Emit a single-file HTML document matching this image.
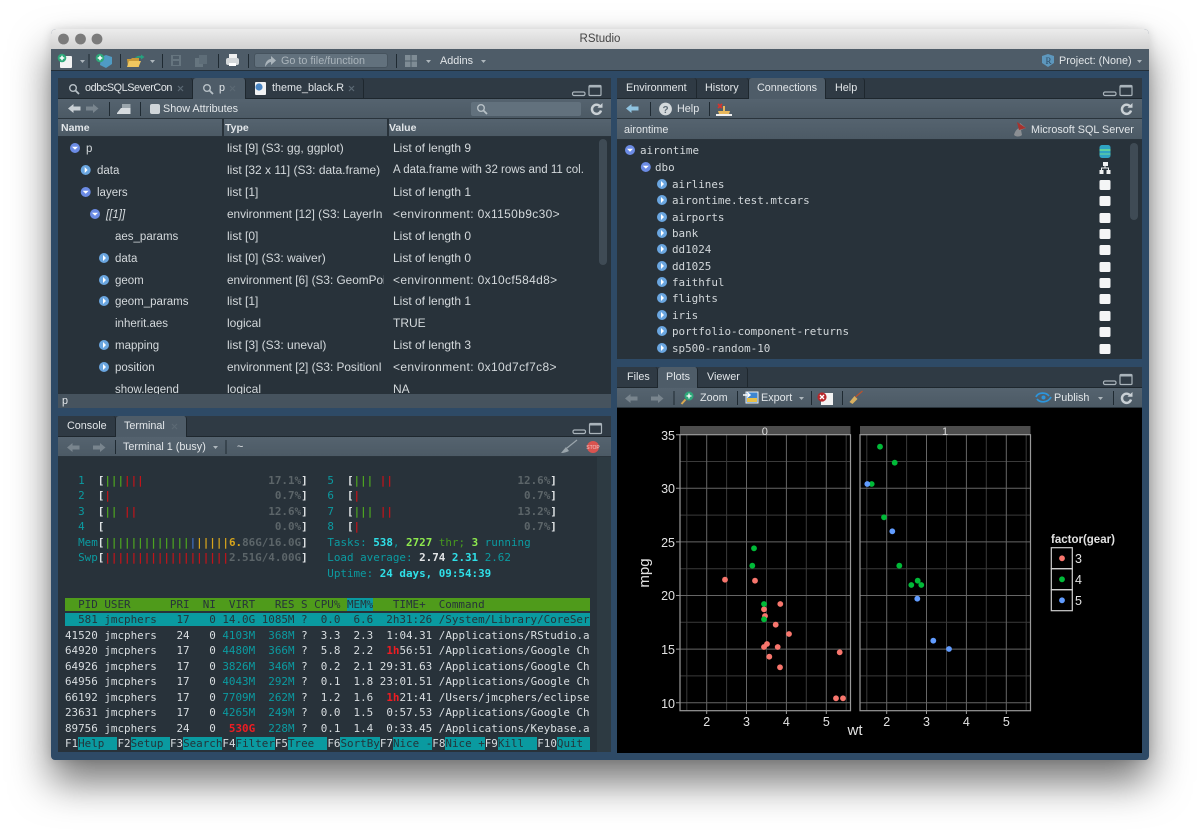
<!DOCTYPE html>
<html><head><meta charset="utf-8"><title>RStudio</title>
<style>
html,body{margin:0;padding:0;background:#fff;width:1200px;height:833px;overflow:hidden}
*{box-sizing:border-box}
.a{position:absolute}
.t{position:absolute;font:10.8px/16px "Liberation Sans",sans-serif;color:#e2e6e9;white-space:pre}
.v{font-size:12px;overflow:hidden;color:#d4d9dc}
.e{letter-spacing:.35px}
.n{font-size:11.5px;color:#d4d9dc;margin-top:1px}
.m{position:absolute;font:10.9px/16px "DejaVu Sans Mono","Liberation Mono",monospace;color:#d2d7da;white-space:pre;margin-top:1px}
#win{position:absolute;left:51px;top:29px;width:1098px;height:731px;border-radius:5px 5px 4px 4px;background:#2e4a66;box-shadow:0 22px 40px rgba(0,0,0,.55),0 0 10px rgba(0,0,0,.12)}
#title{position:absolute;left:51px;top:29px;width:1098px;height:20px;border-radius:5px 5px 0 0;background:linear-gradient(#ececec,#d2d2d2);font:11.5px/21px "Liberation Sans",sans-serif;color:#444;text-align:center}
#mtb{position:absolute;left:51px;top:49px;width:1098px;height:22px;background:#4e5c68;border-bottom:1px solid #24303a}
.pane{position:absolute;background:#28323a;border-radius:4px 4px 0 0;overflow:hidden}
.strip{position:absolute;background:#2f3a44;border-bottom:1px solid #1e272e}
.tab{position:absolute;background:#2f3a44;border-right:1px solid #1e272e;border-radius:3px 3px 0 0}
.on{background:#4e5c68}
.bar{position:absolute;background:linear-gradient(#55636f,#4c5a65);border-bottom:1px solid #2a343c}
#term{position:absolute;left:65px;top:472.75px;font:10.9px/15.5px "DejaVu Sans Mono","Liberation Mono",monospace;color:#d8dde0;white-space:pre}
.c{color:#0b9ba1}.d{color:#5c6569;font-weight:bold}.w{color:#dfe3e5;font-weight:bold}.g{color:#4ca320;font-weight:bold}.g2{color:#479a1e}.r{color:#c0141a;font-weight:bold}.y{color:#d6a41c;font-weight:bold}.b{color:#3e6fc0;font-weight:bold}
.hd{background:#4f9b1b;color:#27343a}.hm{background:#0a9aa0;color:#27343a}.hl{background:#0a9aa0;color:#24343a}
.R{color:#f01c22;font-weight:bold}.C{color:#2fe0e8;font-weight:bold}.G{color:#8eea4e;font-weight:bold}.W{color:#e2e4e6;font-weight:bold}
svg text{font-family:"Liberation Sans",sans-serif}
</style></head><body>
<div id="win"></div>
<div id="title">RStudio</div>
<div id="mtb"></div>

<div class="a" style="left:53px;top:71px;width:1094px;height:3px;background:#2e4a66"></div>

<!-- Top-left pane -->
<div class="pane" style="left:58px;top:78px;width:553px;height:330px"></div>
<div class="strip" style="left:58px;top:78px;width:553px;height:21px"></div>
<div class="tab" style="left:58px;top:78px;width:135px;height:20px"></div>
<div class="tab on" style="left:193px;top:78px;width:53px;height:21px"></div>
<div class="tab" style="left:246px;top:78px;width:118px;height:20px"></div>
<div class="bar" style="left:58px;top:99px;width:553px;height:20px"></div>
<div class="bar" style="left:58px;top:119px;width:553px;height:18px"></div>
<div class="a" style="left:222px;top:119px;height:18px;background:#28323a;width:2px"></div>
<div class="a" style="left:387px;top:119px;height:18px;background:#28323a;width:2px"></div>
<div class="a" style="left:58px;top:394px;width:553px;height:14px;background:#46535e"></div>
<div class="a" style="left:254px;top:53px;width:134px;height:15px;background:#62717d;border-radius:3px;border:1px solid #46535e"></div>
<div class="a" style="left:471px;top:102px;width:110px;height:14px;background:#62717d;border-radius:2px"></div>
<div class="a" style="left:599px;top:139px;width:8px;height:126px;background:#3f4b55;border-radius:4px"></div>

<span class="t" style="left:85px;top:80px;letter-spacing:-.4px">odbcSQLSeverCon</span>
<span class="t" style="left:219px;top:80px">p</span>
<span class="t" style="left:272px;top:80px">theme_black.R</span>
<span class="t" style="left:163px;top:101px">Show Attributes</span>
<span class="t" style="left:61px;top:120px;font-weight:bold;font-size:10.5px">Name</span>
<span class="t" style="left:225px;top:120px;font-weight:bold;font-size:10.5px">Type</span>
<span class="t" style="left:389px;top:120px;font-weight:bold;font-size:10.5px">Value</span>

<div class="a" style="left:58px;top:137px;width:553px;height:257px;overflow:hidden">
<span class="t n" style="left:28px;top:3px">p</span><span class="t v" style="left:169px;top:3px">list [9] (S3: gg, ggplot)</span><span class="t v" style="left:335px;top:3px">List of length 9</span>
<span class="t n" style="left:39px;top:25px">data</span><span class="t v" style="left:169px;top:25px;width:157px">list [32 x 11] (S3: data.frame)</span><span class="t v" style="left:335px;top:25px;width:192px;font-size:11.5px">A data.frame with 32 rows and 11 col.</span>
<span class="t n" style="left:39px;top:47px">layers</span><span class="t v" style="left:169px;top:47px">list [1]</span><span class="t v" style="left:335px;top:47px">List of length 1</span>
<span class="t n" style="left:48px;top:69px;font-style:italic">[[1]]</span><span class="t v" style="left:169px;top:69px;width:157px;font-size:11.8px">environment [12] (S3: LayerIn</span><span class="t v e" style="left:335px;top:69px">&lt;environment: 0x1150b9c30&gt;</span>
<span class="t n" style="left:57px;top:91px">aes_params</span><span class="t v" style="left:169px;top:91px">list [0]</span><span class="t v" style="left:335px;top:91px">List of length 0</span>
<span class="t n" style="left:57px;top:113px">data</span><span class="t v" style="left:169px;top:113px">list [0] (S3: waiver)</span><span class="t v" style="left:335px;top:113px">List of length 0</span>
<span class="t n" style="left:57px;top:135px">geom</span><span class="t v" style="left:169px;top:135px;width:157px;font-size:11.8px">environment [6] (S3: GeomPoi</span><span class="t v e" style="left:335px;top:135px">&lt;environment: 0x10cf584d8&gt;</span>
<span class="t n" style="left:57px;top:156px">geom_params</span><span class="t v" style="left:169px;top:156px">list [1]</span><span class="t v" style="left:335px;top:156px">List of length 1</span>
<span class="t n" style="left:57px;top:178px">inherit.aes</span><span class="t v" style="left:169px;top:178px">logical</span><span class="t v" style="left:335px;top:178px">TRUE</span>
<span class="t n" style="left:57px;top:200px">mapping</span><span class="t v" style="left:169px;top:200px">list [3] (S3: uneval)</span><span class="t v" style="left:335px;top:200px">List of length 3</span>
<span class="t n" style="left:57px;top:222px">position</span><span class="t v" style="left:169px;top:222px;width:157px;font-size:11.8px">environment [2] (S3: PositionI</span><span class="t v e" style="left:335px;top:222px">&lt;environment: 0x10d7cf7c8&gt;</span>
<span class="t n" style="left:57px;top:244px">show.legend</span><span class="t v" style="left:169px;top:244px">logical</span><span class="t v" style="left:335px;top:244px">NA</span>
</div>
<span class="t" style="left:62px;top:393px">p</span>

<!-- Bottom-left pane -->
<div class="pane" style="left:58px;top:416px;width:553px;height:336px"></div>
<div class="strip" style="left:58px;top:416px;width:553px;height:21px"></div>
<div class="tab" style="left:58px;top:416px;width:58px;height:20px"></div>
<div class="tab on" style="left:116px;top:416px;width:71px;height:21px"></div>
<div class="bar" style="left:58px;top:437px;width:553px;height:20px"></div>
<div class="a" style="left:597px;top:457px;width:14px;height:295px;background:#2d3a42"></div>
<span class="t" style="left:67px;top:418px">Console</span>
<span class="t" style="left:124px;top:418px">Terminal</span>
<span class="t" style="left:123px;top:439px">Terminal 1 (busy)</span>
<span class="t" style="left:237px;top:439px">~</span>

<pre id="term" class="a" style="margin:0"><span class="c">  1  </span><span class="w">[</span><span class="g">|||</span><span class="r">|||</span>                   <span class="d">17.1%</span><span class="w">]</span>   <span class="c">5  </span><span class="w">[</span><span class="g">|||</span> <span class="r">||</span>                   <span class="d">12.6%</span><span class="w">]</span>
<span class="c">  2  </span><span class="w">[</span><span class="r">|</span>                         <span class="d">0.7%</span><span class="w">]</span>   <span class="c">6  </span><span class="w">[</span><span class="r">|</span>                         <span class="d">0.7%</span><span class="w">]</span>
<span class="c">  3  </span><span class="w">[</span><span class="g">||</span> <span class="r">||</span>                    <span class="d">12.6%</span><span class="w">]</span>   <span class="c">7  </span><span class="w">[</span><span class="g">|||</span> <span class="r">||</span>                   <span class="d">13.2%</span><span class="w">]</span>
<span class="c">  4  </span><span class="w">[</span>                          <span class="d">0.0%</span><span class="w">]</span>   <span class="c">8  </span><span class="w">[</span><span class="r">|</span>                         <span class="d">0.7%</span><span class="w">]</span>
<span class="c">  Mem</span><span class="w">[</span><span class="g">|||||||||||||</span><span class="b">|</span><span class="y">|||||6.</span><span class="d">86G/16.0G</span><span class="w">]</span>   <span class="c">Tasks: </span><span class="C">538</span><span class="c">, </span><span class="G">2727</span><span class="g2"> thr; </span><span class="G">3</span><span class="c"> running</span>
<span class="c">  Swp</span><span class="w">[</span><span class="r">|||||||||||||||||||</span><span class="d">2.51G/4.00G</span><span class="w">]</span>   <span class="c">Load average: </span><span class="W">2.74 </span><span class="C">2.31 </span><span class="c">2.62</span>
<span class="c">                                        Uptime: </span><span class="C">24 days, 09:54:39</span>

<span class="hd">  PID USER      PRI  NI  VIRT   RES S CPU% </span><span class="hm">MEM%</span><span class="hd">   TIME+  Command                </span>
<span class="hl">  581 jmcphers   17   0 14.0G 1085M ?  0.0  6.6  2h31:26 /System/Library/CoreSer</span>
41520 jmcphers   24   0 <span class="c">4103M</span>  <span class="c">368M</span> ?  3.3  2.3  1:04.31 /Applications/RStudio.a
64920 jmcphers   17   0 <span class="c">4480M</span>  <span class="c">366M</span> ?  5.8  2.2  <span class="R">1h</span>56:51 /Applications/Google Ch
64926 jmcphers   17   0 <span class="c">3826M</span>  <span class="c">346M</span> ?  0.2  2.1 29:31.63 /Applications/Google Ch
64956 jmcphers   17   0 <span class="c">4043M</span>  <span class="c">292M</span> ?  0.1  1.8 23:01.51 /Applications/Google Ch
66192 jmcphers   17   0 <span class="c">7709M</span>  <span class="c">262M</span> ?  1.2  1.6  <span class="R">1h</span>21:41 /Users/jmcphers/eclipse
23631 jmcphers   17   0 <span class="c">4265M</span>  <span class="c">249M</span> ?  0.0  1.5  0:57.53 /Applications/Google Ch
89756 jmcphers   24   0  <span class="R">530G</span>  <span class="c">228M</span> ?  0.1  1.4  0:33.45 /Applications/Keybase.a
F1<span class="hl">Help  </span>F2<span class="hl">Setup </span>F3<span class="hl">Search</span>F4<span class="hl">Filter</span>F5<span class="hl">Tree  </span>F6<span class="hl">SortBy</span>F7<span class="hl">Nice -</span>F8<span class="hl">Nice +</span>F9<span class="hl">Kill  </span>F10<span class="hl">Quit </span></pre>

<!-- Top-right pane -->
<div class="pane" style="left:617px;top:78px;width:525px;height:281px"></div>
<div class="strip" style="left:617px;top:78px;width:525px;height:21px"></div>
<div class="tab" style="left:617px;top:78px;width:80px;height:20px"></div>
<div class="tab" style="left:697px;top:78px;width:52px;height:20px"></div>
<div class="tab on" style="left:749px;top:78px;width:77px;height:21px"></div>
<div class="tab" style="left:826px;top:78px;width:39px;height:20px"></div>
<div class="bar" style="left:617px;top:99px;width:525px;height:20px"></div>
<div class="bar" style="left:617px;top:119px;width:525px;height:21px"></div>
<div class="a" style="left:1130px;top:143px;width:8px;height:77px;background:#3f4b55;border-radius:4px"></div>
<span class="t" style="left:626px;top:80px">Environment</span>
<span class="t" style="left:705px;top:80px">History</span>
<span class="t" style="left:757px;top:80px">Connections</span>
<span class="t" style="left:835px;top:80px">Help</span>
<span class="t" style="left:677px;top:101px">Help</span>
<span class="t" style="left:624px;top:122px">airontime</span>
<span class="t" style="left:1031px;top:122px">Microsoft SQL Server</span>

<span class="m" style="left:640px;top:142px">airontime</span>
<span class="m" style="left:655px;top:159px">dbo</span>
<span class="m" style="left:672px;top:176px">airlines</span>
<span class="m" style="left:672px;top:192px">airontime.test.mtcars</span>
<span class="m" style="left:672px;top:209px">airports</span>
<span class="m" style="left:672px;top:225px">bank</span>
<span class="m" style="left:672px;top:241px">dd1024</span>
<span class="m" style="left:672px;top:258px">dd1025</span>
<span class="m" style="left:672px;top:274px">faithful</span>
<span class="m" style="left:672px;top:290px">flights</span>
<span class="m" style="left:672px;top:307px">iris</span>
<span class="m" style="left:672px;top:323px">portfolio-component-returns</span>
<span class="m" style="left:672px;top:340px">sp500-random-10</span>

<!-- Bottom-right pane -->
<div class="pane" style="left:617px;top:367px;width:525px;height:386px;background:#000"></div>
<div class="strip" style="left:617px;top:367px;width:525px;height:21px"></div>
<div class="tab" style="left:617px;top:367px;width:41px;height:20px"></div>
<div class="tab on" style="left:658px;top:367px;width:40px;height:21px"></div>
<div class="tab" style="left:698px;top:367px;width:50px;height:20px"></div>
<div class="bar" style="left:617px;top:388px;width:525px;height:20px"></div>
<span class="t" style="left:627px;top:369px">Files</span>
<span class="t" style="left:666px;top:369px">Plots</span>
<span class="t" style="left:707px;top:369px">Viewer</span>
<span class="t" style="left:700px;top:390px">Zoom</span>
<span class="t" style="left:761px;top:390px">Export</span>
<span class="t" style="left:1054px;top:390px">Publish</span>

<!-- main toolbar text -->
<span class="t" style="left:281px;top:53px;color:#aab4bb;font-size:10.8px">Go to file/function</span>
<span class="t" style="left:440px;top:53px">Addins</span>
<span class="t" style="left:1059px;top:53px">Project: (None)</span>

<!-- icons + plot -->
<svg class="a" style="left:0;top:0" width="1200" height="833" viewBox="0 0 1200 833">
<defs>
<path id="al" d="M0 4.5L5.5 0V2.5H12.5V6.5H5.5V9Z"/>
<path id="ar" d="M12.5 4.5L7 0V2.5H0V6.5H7V9Z"/>
<path id="dd" d="M0 0H5L2.5 3Z" fill="#aeb7bd"/>
<g id="exp"><circle cx="0" cy="0" r="5" fill="#6c8ce6"/><path d="M-3-1.3H3L0 1.8Z" fill="#fff"/></g>
<g id="col"><circle cx="0" cy="0" r="5" fill="#6aa6e0"/><path d="M-1-3V3L2 0Z" fill="#fff"/></g>
<g id="wm" fill="none" stroke="#aab4bb"><rect x="0.5" y="7" width="12.5" height="3.5" rx="1.5" stroke-width="1.2"/><rect x="17" y="0.5" width="12" height="10" rx="1" stroke-width="1.2"/><path d="M17 1.5H29" stroke-width="2"/></g>
<g id="rf"><path d="M10 3.2A4.6 4.6 0 1 0 11 7.5" fill="none" stroke="#c9d0d5" stroke-width="2.4"/><path d="M7.5 4.8H12.5V0Z" fill="#c9d0d5"/></g>
<g id="mg" fill="none" stroke="#b7c0c6" stroke-width="1.4"><circle cx="4" cy="4" r="3.3"/><path d="M6.5 6.5L10 10" stroke-width="1.8"/></g>
<g id="tb"><rect x="0" y="0" width="11" height="10" rx="1.5" fill="#f4f5f6"/></g>
<g id="x"><path d="M0 0L5 5M5 0L0 5" stroke="#5c6974" stroke-width="1.2"/></g>
<g id="broom"><path d="M0 11L5 5L8 8L3 13Z" fill="#d8b060"/><path d="M6 6L13 0" stroke="#b8522e" stroke-width="1.3"/></g>
</defs>

<!-- traffic lights -->
<g fill="#7b7b7b"><circle cx="63.5" cy="39" r="5.4"/><circle cx="80.5" cy="39" r="5.4"/><circle cx="97" cy="39" r="5.4"/></g>

<!-- main toolbar -->
<rect x="60" y="56" width="12" height="12" rx="1" fill="#f3f3f3"/><circle cx="62" cy="58" r="4.3" fill="#2fa87a"/><path d="M62 55.7V60.3M59.7 58H64.3" stroke="#fff" stroke-width="1.5"/>
<use href="#dd" x="80" y="60"/><rect x="88.5" y="54" width="1" height="14" fill="#1f2a32"/>
<path d="M101 57L106 55L112 57V64L106 68L100 65Z" fill="#4f9bc4"/><circle cx="100" cy="58" r="4.3" fill="#2fa87a"/><path d="M100 55.7V60.3M97.7 58H102.3" stroke="#fff" stroke-width="1.5"/>
<rect x="120" y="54" width="1" height="14" fill="#1f2a32"/>
<path d="M127 59H131L132 58H139V67H128Z" fill="#c99a38"/><path d="M127 67L129 61H141L138.5 67Z" fill="#efc760"/><path d="M135 58C136 56 139 55.5 141 56V54.5L144.5 57L141 59.5V58C139 57.5 137 58 135 58Z" fill="#26a07e"/>
<use href="#dd" x="150" y="60"/><rect x="162" y="54" width="1" height="14" fill="#1f2a32"/>
<g fill="#66757f"><path d="M171 55H181V66H171Z"/><path d="M195 58H203V67H195Z"/><path d="M199 55H207V64H199Z" fill="#5e6d78"/></g>
<rect x="173" y="61" width="6" height="4" fill="#4e5c68"/><rect x="173" y="56" width="6" height="3" fill="#4e5c68"/>
<rect x="218" y="54" width="1" height="14" fill="#1f2a32"/>
<rect x="229" y="54" width="8" height="5" fill="#f0f0f0"/><rect x="226" y="58" width="13" height="7" rx="2" fill="#d4d8da"/><rect x="229" y="63" width="7" height="3" fill="#fff"/>
<rect x="248" y="54" width="1" height="14" fill="#1f2a32"/>
<path d="M265 67C265 62 268 59 271 59V56L276 60.5L271 65V62C269 62 267 64 265 67Z" fill="#aab4bb"/>
<rect x="396" y="54" width="1" height="14" fill="#1f2a32"/>
<rect x="405" y="55" width="12" height="12" fill="#7f8c95"/><path d="M411 55V67M405 61H417" stroke="#4e5c68" stroke-width="1"/>
<use href="#dd" x="426" y="60"/><use href="#dd" x="481" y="60"/>
<path d="M1048 54L1054 56V63L1048 67L1042 63V56Z" fill="#5d97bd"/><text x="1045.5" y="64" font-size="9" fill="#2d4a64" style="font-family:'Liberation Serif',serif">R</text>
<use href="#dd" x="1137" y="60"/>

<!-- source tabs -->
<use href="#mg" x="69" y="84"/><use href="#x" x="178" y="86"/>
<use href="#mg" x="203" y="84"/><use href="#x" x="230" y="86"/>
<rect x="255" y="82" width="11" height="13" rx="1" fill="#f2f3f4"/><circle cx="259" cy="87" r="3.6" fill="#4a86c4"/><use href="#x" x="349" y="86"/>
<use href="#wm" x="572" y="85"/>
<use href="#al" x="68" y="104" fill="#c9d0d5"/><use href="#ar" x="86" y="104" fill="#79858e"/>
<rect x="109" y="102" width="1" height="14" fill="#1f2a32"/>
<path d="M117 113L121 108H130.5V114H117Z" fill="#d6dbdf"/><path d="M122 104H130.5V108H122Z" fill="#9aa5ac"/>
<rect x="140" y="102" width="1" height="14" fill="#1f2a32"/>
<rect x="150" y="104" width="10" height="10" rx="2" fill="#cfd5d9"/>
<use href="#mg" x="477" y="104"/><use href="#rf" x="590" y="103"/>

<!-- viewer tree icons -->
<use href="#exp" x="75" y="148"/><use href="#col" x="85.7" y="170"/><use href="#exp" x="85.7" y="192"/><use href="#exp" x="95" y="214"/>
<use href="#col" x="104" y="258"/><use href="#col" x="104" y="280"/><use href="#col" x="104" y="301"/><use href="#col" x="104" y="345"/><use href="#col" x="104" y="367"/>

<!-- terminal toolbar -->
<use href="#x" x="172" y="424"/>
<use href="#al" x="67" y="443" fill="#79858e"/><use href="#ar" x="93" y="443" fill="#79858e"/>
<rect x="115" y="440" width="1" height="14" fill="#1f2a32"/><use href="#dd" x="213" y="446"/><rect x="225.5" y="440" width="1" height="14" fill="#1f2a32"/>
<path d="M561 453L566 447L569 451C567 452 564 453 561 453Z" fill="#9aa5ac"/><path d="M567 448L577 440" stroke="#9aa5ac" stroke-width="1.2"/>
<circle cx="593" cy="447" r="6" fill="#d9534f"/><text x="593" y="449" font-size="5" text-anchor="middle" fill="#f3c8c6">STOP</text>
<use href="#wm" x="572.5" y="423"/>

<!-- right top -->
<use href="#wm" x="1103" y="85"/>
<use href="#al" x="626" y="104" fill="#8fc3e0"/><rect x="650" y="102" width="1" height="14" fill="#1f2a32"/>
<circle cx="665.5" cy="109" r="6.4" fill="#d4d9dc"/><text x="665.5" y="113" font-size="10" font-weight="bold" text-anchor="middle" fill="#5f6c76">?</text>
<rect x="709" y="102" width="1" height="14" fill="#1f2a32"/>
<path d="M716 114H732V116H716Z" fill="#f0f0f0"/><path d="M718 111H730L729 114H719Z" fill="#e8b75c"/><rect x="723" y="106" width="2" height="6" fill="#e8b75c"/><path d="M718 104L722 108M722 104L718 108" stroke="#d9332c" stroke-width="1.6"/>
<use href="#rf" x="1120" y="103"/>
<path d="M1020 123L1026 128L1021 130L1022 135C1020 137 1016 137 1014 135C1015 131 1017 129 1019 128Z" fill="#8b8f93"/><path d="M1017 122L1026 128L1019 130Z" fill="#a8322e"/>

<use href="#exp" x="630" y="150"/><use href="#exp" x="645.8" y="167"/>
<use href="#col" x="662" y="184"/><use href="#col" x="662" y="200"/><use href="#col" x="662" y="217"/><use href="#col" x="662" y="233"/><use href="#col" x="662" y="249"/><use href="#col" x="662" y="266"/><use href="#col" x="662" y="282"/><use href="#col" x="662" y="298"/><use href="#col" x="662" y="315"/><use href="#col" x="662" y="331"/><use href="#col" x="662" y="348"/>
<rect x="1099.5" y="145" width="11" height="13" rx="2.5" fill="#2fa4c4"/><rect x="1099.5" y="149" width="11" height="2" fill="#5fd0a0"/><rect x="1099.5" y="153" width="11" height="2" fill="#4fc0b0"/>
<g fill="#f0f2f3"><rect x="1103" y="162" width="5" height="4"/><rect x="1099.5" y="170" width="4" height="4"/><rect x="1106.5" y="170" width="4" height="4"/><path d="M1105 166V168M1101.5 170V168H1108.5V170" stroke="#f0f2f3" fill="none"/></g>
<use href="#tb" x="1099.5" y="180"/><use href="#tb" x="1099.5" y="196"/><use href="#tb" x="1099.5" y="213"/><use href="#tb" x="1099.5" y="229"/><use href="#tb" x="1099.5" y="245"/><use href="#tb" x="1099.5" y="262"/><use href="#tb" x="1099.5" y="278"/><use href="#tb" x="1099.5" y="294"/><use href="#tb" x="1099.5" y="311"/><use href="#tb" x="1099.5" y="327"/><use href="#tb" x="1099.5" y="344"/>

<!-- plots toolbar -->
<use href="#wm" x="1103" y="374"/>
<use href="#al" x="625" y="394" fill="#79858e"/><use href="#ar" x="651" y="394" fill="#79858e"/>
<rect x="673.5" y="391" width="1" height="14" fill="#1f2a32"/>
<circle cx="689" cy="396" r="4.5" fill="#2fa87a"/><path d="M689 393.5V398.5M686.5 396H691.5" stroke="#fff" stroke-width="1.3"/><path d="M685.5 399.5L681.5 404" stroke="#d8a850" stroke-width="2"/>
<rect x="737" y="391" width="1" height="14" fill="#1f2a32"/>
<rect x="746" y="392" width="12" height="11" fill="#3f86d0" stroke="#eee"/><rect x="747" y="398" width="10" height="4" fill="#e8c04a"/><path d="M743 395H749M747 392.5L750 395L747 397.5" stroke="#fff" fill="none" stroke-width="1.4"/>
<use href="#dd" x="799" y="397"/><rect x="811" y="391" width="1" height="14" fill="#1f2a32"/>
<rect x="821" y="393" width="12" height="12" fill="#f3f3f3"/><circle cx="822" cy="397" r="4.6" fill="#b8282c"/><path d="M820 395L824 399M824 395L820 399" stroke="#fff" stroke-width="1.3"/>
<rect x="842" y="391" width="1" height="14" fill="#1f2a32"/>
<use href="#broom" x="849.5" y="391"/>
<path d="M1036 397C1038 392 1046 392 1049 396M1051 397C1048 403 1040 403 1037 399" fill="none" stroke="#2c95dc" stroke-width="1.7"/><circle cx="1043.5" cy="397.5" r="2" fill="#2c95dc"/>
<use href="#dd" x="1098" y="397"/><rect x="1113" y="391" width="1" height="14" fill="#1f2a32"/><use href="#rf" x="1120" y="392"/>

<!-- PLOT -->
<rect x="680" y="426" width="170.5" height="8.7" fill="#4d4d4d"/>
<rect x="860" y="426" width="170.5" height="8.7" fill="#4d4d4d"/>
<g stroke="#3a3a3a" stroke-width="1">
<path d="M680 675.9H850.5M680 622.3H850.5M680 568.7H850.5M680 515.1H850.5M680 461.5H850.5M860 675.9H1030.5M860 622.3H1030.5M860 568.7H1030.5M860 515.1H1030.5M860 461.5H1030.5"/>
<path d="M686.8 434.7V710.7M726.6 434.7V710.7M766.5 434.7V710.7M806.3 434.7V710.7M846.2 434.7V710.7M866.8 434.7V710.7M906.6 434.7V710.7M946.5 434.7V710.7M986.3 434.7V710.7M1026.2 434.7V710.7"/>
</g>
<g stroke="#666" stroke-width="1">
<path d="M680 702.7H850.5M680 649.1H850.5M680 595.5H850.5M680 541.9H850.5M680 488.3H850.5M860 702.7H1030.5M860 649.1H1030.5M860 595.5H1030.5M860 541.9H1030.5M860 488.3H1030.5"/>
<path d="M706.7 434.7V710.7M746.5 434.7V710.7M786.4 434.7V710.7M826.3 434.7V710.7M886.7 434.7V710.7M926.5 434.7V710.7M966.4 434.7V710.7M1006.3 434.7V710.7"/>
</g>
<rect x="680" y="434.7" width="170.5" height="276" fill="none" stroke="#999" stroke-width="1.2"/>
<rect x="860" y="434.7" width="170.5" height="276" fill="none" stroke="#999" stroke-width="1.2"/>
<path d="M676 434.7H680M676 488.3H680M676 541.9H680M676 595.5H680M676 649.1H680M676 702.7H680M706.7 711V714M746.5 711V714M786.4 711V714M826.3 711V714M886.7 711V714M926.5 711V714M966.4 711V714M1006.3 711V714" stroke="#999"/>
<g fill="#e2e2e2" font-size="12.5">
<g text-anchor="end"><text x="675" y="440">35</text><text x="675" y="493">30</text><text x="675" y="547">25</text><text x="675" y="600">20</text><text x="675" y="654">15</text><text x="675" y="708">10</text></g>
<g text-anchor="middle"><text x="706.7" y="726">2</text><text x="746.5" y="726">3</text><text x="786.4" y="726">4</text><text x="826.3" y="726">5</text><text x="886.7" y="726">2</text><text x="926.5" y="726">3</text><text x="966.4" y="726">4</text><text x="1006.3" y="726">5</text></g>
<text x="764.8" y="435" text-anchor="middle" font-size="11" fill="#ddd">0</text><text x="945" y="435" text-anchor="middle" font-size="11" fill="#ddd">1</text>
<text x="855" y="735" text-anchor="middle" font-size="15">wt</text>
<text transform="translate(649,573) rotate(-90)" text-anchor="middle" font-size="15">mpg</text>
<text x="1051" y="543" font-size="11.5" font-weight="bold">factor(gear)</text>
<text x="1075" y="563">3</text><text x="1075" y="584">4</text><text x="1075" y="605">5</text>
</g>
<g fill="none" stroke="#d0d0d0" stroke-width="1.2"><rect x="1051.3" y="547.7" width="21" height="21"/><rect x="1051.3" y="568.7" width="21" height="21"/><rect x="1051.3" y="589.7" width="21" height="21"/></g>
<circle cx="1062" cy="558.3" r="2.9" fill="#F8766D"/><circle cx="1062" cy="579.3" r="2.9" fill="#00BA38"/><circle cx="1062" cy="600.3" r="2.9" fill="#619CFF"/>
<g fill="#F8766D"><circle cx="725" cy="579.7" r="2.9"/><circle cx="755" cy="580.7" r="2.9"/><circle cx="764" cy="609.3" r="2.9"/><circle cx="765" cy="616" r="2.9"/><circle cx="780.3" cy="604" r="2.9"/><circle cx="775.7" cy="624.7" r="2.9"/><circle cx="789" cy="634" r="2.9"/><circle cx="767" cy="644" r="2.9"/><circle cx="764" cy="647" r="2.9"/><circle cx="777.7" cy="647" r="2.9"/><circle cx="769.3" cy="656.7" r="2.9"/><circle cx="780" cy="667.3" r="2.9"/><circle cx="839.7" cy="652.3" r="2.9"/><circle cx="836" cy="698.3" r="2.9"/><circle cx="843" cy="698.3" r="2.9"/></g>
<g fill="#00BA38"><circle cx="754" cy="548.3" r="2.9"/><circle cx="752.3" cy="565.7" r="2.9"/><circle cx="764" cy="604" r="2.9"/><circle cx="764" cy="619.3" r="2.9"/><circle cx="880" cy="446.7" r="2.9"/><circle cx="894.7" cy="462.7" r="2.9"/><circle cx="871.7" cy="484" r="2.9"/><circle cx="884" cy="517.3" r="2.9"/><circle cx="899.3" cy="565.7" r="2.9"/><circle cx="917.7" cy="580.7" r="2.9"/><circle cx="911.3" cy="585" r="2.9"/><circle cx="921.3" cy="585" r="2.9"/></g>
<g fill="#619CFF"><circle cx="867.3" cy="484" r="2.9"/><circle cx="892.3" cy="531.3" r="2.9"/><circle cx="917.3" cy="598.7" r="2.9"/><circle cx="933.3" cy="640.7" r="2.9"/><circle cx="949" cy="649" r="2.9"/></g>
</svg>
</body></html>
